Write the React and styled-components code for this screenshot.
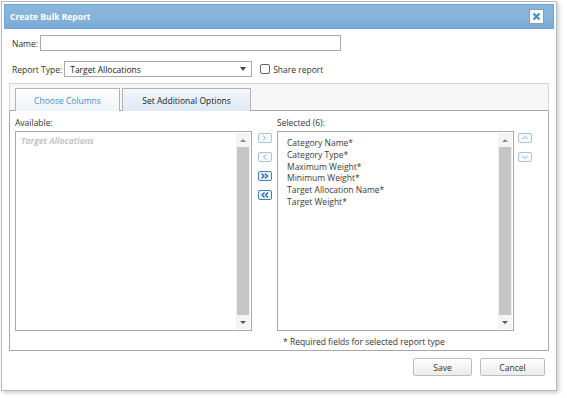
import React from "react";
import styled, { createGlobalStyle } from "styled-components";

const Global = createGlobalStyle`
  html, body { margin: 0; padding: 0; background: #fff; }
  body { font-family: "Open Sans", "Noto Sans", sans-serif; font-size: 8.5px; color: #333; }
  * { box-sizing: border-box; }
`;

const available = [];
const selected = [
  "Category Name*",
  "Category Type*",
  "Maximum Weight*",
  "Minimum Weight*",
  "Target Allocation Name*",
  "Target Weight*",
];

const Page = styled.div`
  padding: 1px;
  width: 567px;
  height: 398px;
`;

const Dialog = styled.div`
  width: 556px;
  height: 390px;
  border: 1px solid #b9b9b9;
  box-shadow: 2px 2px 4px rgba(0, 0, 0, 0.2);
  background: #fff;
  padding: 2px;
  display: flex;
  flex-direction: column;
`;

const TitleBar = styled.div`
  height: 25px;
  background: linear-gradient(#8cb7dc, #84b2da 60%, #78a9d5);
  border: 1px solid #6fa3d2;
  display: flex;
  align-items: center;
  justify-content: space-between;
  padding: 0 9px 0 5px;
  color: #fff;
  font-weight: 700;
  font-size: 8.5px;
`;

const CloseBtn = styled.div`
  width: 15px;
  height: 15px;
  background: #fff;
  border: 1px solid #9a9a9a;
  display: flex;
  align-items: center;
  justify-content: center;
`;

const Body = styled.div`
  padding: 6px 5px 0 5px;
  display: flex;
  flex-direction: column;
`;

const Row = styled.div`
  display: flex;
  align-items: center;
  height: 16px;
  margin-left: 3px;
  margin-bottom: ${(p) => p.$mb || 0}px;
`;

const Label = styled.span`
  margin-right: 2px;
  color: #333;
`;

const TextInput = styled.div`
  width: ${(p) => p.$w}px;
  height: 16px;
  border: 1px solid #aaa;
  background: #fff;
  display: flex;
  align-items: center;
  justify-content: space-between;
  padding: 0 5px;
  color: #222;
`;

const Caret = styled.span`
  width: 0;
  height: 0;
  border-left: 3px solid transparent;
  border-right: 3px solid transparent;
  border-top: 4px solid #444;
`;

const Check = styled.span`
  width: 10px;
  height: 10px;
  border: 1px solid #666;
  border-radius: 2px;
  margin: 0 3px 0 8px;
  background: #fff;
`;

const TabPanel = styled.div`
  margin-top: 6px;
  width: 540px;
  height: 268px;
  border: 1px solid #d6d6d6;
  display: flex;
  flex-direction: column;
`;

const TabStrip = styled.div`
  height: 27px;
  background: #f7f7f7;
  display: flex;
  align-items: flex-end;
  gap: 2px;
  padding-left: 5px;
  border-bottom: 1px solid #a8a8a8;
`;

const Tab = styled.div`
  height: 23px;
  width: ${(p) => p.$w}px;
  border: 1px solid #b3b3b3;
  border-bottom: none;
  background: ${(p) => (p.$active ? "linear-gradient(#f1f6fb, #dfeaf6)" : "linear-gradient(#fdfefe, #eef4f8)")};
  color: ${(p) => (p.$active ? "#222" : "#4b8dc3")};
  display: flex;
  align-items: center;
  justify-content: center;
  margin-bottom: -1px;
  position: relative;
  z-index: ${(p) => (p.$active ? 1 : 0)};
`;

const Content = styled.div`
  flex: 1;
  display: flex;
  padding: 4px 0 0 5px;
  border-left: 1px solid #a8a8a8;
  border-right: 1px solid #a8a8a8;
  border-bottom: 1px solid #a8a8a8;
  margin: 0 -1px -1px -1px;
`;

const Column = styled.div`
  display: flex;
  flex-direction: column;
`;

const ColLabel = styled.div`
  height: 16px;
  line-height: 16px;
  color: #333;
`;

const ListBox = styled.div`
  width: 237px;
  height: 200px;
  border: 1px solid #a9a9a9;
  background: #fff;
  display: flex;
`;

const Items = styled.div`
  flex: 1;
  padding: ${(p) => (p.$empty ? "3px 5px" : "5px 9px")};
  display: flex;
  flex-direction: column;
  line-height: 11.8px;
  color: #3a3a3a;
`;

const Placeholder = styled.div`
  color: #c4c4c4;
  font-style: italic;
  font-weight: 700;
`;

const Scroll = styled.div`
  width: 14px;
  margin: 1px 1px 1px 0;
  display: flex;
  flex-direction: column;
  background: #f0f0f0;
`;

const ScrollArrow = styled.div`
  height: 14px;
  display: flex;
  align-items: center;
  justify-content: center;
  background: #f4f4f4;
`;

const ArrowGlyph = styled.span`
  width: 0;
  height: 0;
  border-left: 3px solid transparent;
  border-right: 3px solid transparent;
  ${(p) => (p.$up ? "border-bottom: 3px solid #8a8a8a;" : "border-top: 3px solid #555;")}
`;

const Thumb = styled.div`
  flex: 1;
  background: #c6c6c6;
  margin: 0 1px;
`;

const MoveCol = styled.div`
  width: 25px;
  display: flex;
  flex-direction: column;
  align-items: center;
  gap: 9px;
  padding-top: 18px;
`;

const SmallBtn = styled.div`
  width: 14px;
  height: 10px;
  border: 1px solid ${(p) => (p.$on ? "#3f7fb8" : "#a9c4dc")};
  border-radius: 2px;
  background: ${(p) => (p.$on ? "#eef4fa" : "#f6f9fc")};
  display: flex;
  align-items: center;
  justify-content: center;
  color: ${(p) => (p.$on ? "#2c6aa5" : "#8fb1d0")};
`;

const OrderCol = styled.div`
  display: flex;
  flex-direction: column;
  gap: 9px;
  padding: 18px 0 0 4px;
`;

const Note = styled.div`
  margin: 5px 0 0 6px;
  color: #333;
  font-size: 8.5px;
`;

const Footer = styled.div`
  display: flex;
  justify-content: flex-end;
  gap: 8px;
  padding: 7px 4px 0 0;
`;

const Button = styled.div`
  width: ${(p) => p.$w}px;
  height: 18px;
  border: 1px solid #bcbcbc;
  border-radius: 2px;
  background: linear-gradient(#fefefe, #ececec);
  display: flex;
  align-items: center;
  justify-content: center;
  color: #333;
`;

const Chevron = ({ dir, on }) => {
  const paths = {
    right: "M2 1.5 L4.5 4 L2 6.5",
    left: "M5 1.5 L2.5 4 L5 6.5",
    up: "M1.5 5 L4 2.5 L6.5 5",
    down: "M1.5 3 L4 5.5 L6.5 3",
    rr: "M0.5 1.5 L3 4 L0.5 6.5 M4 1.5 L6.5 4 L4 6.5",
    ll: "M3.5 1.5 L1 4 L3.5 6.5 M7 1.5 L4.5 4 L7 6.5",
  };
  return (
    <svg width="8" height="8" viewBox="0 0 8 8">
      <path d={paths[dir]} fill="none" stroke="currentColor" strokeWidth={on ? 1.4 : 1} />
    </svg>
  );
};

const ScrollBar = () => (
  <Scroll>
    <ScrollArrow>
      <ArrowGlyph $up />
    </ScrollArrow>
    <Thumb />
    <ScrollArrow>
      <ArrowGlyph />
    </ScrollArrow>
  </Scroll>
);

export default function App() {
  return (
    <Page>
      <Global />
      <Dialog>
        <TitleBar>
          <span>Create Bulk Report</span>
          <CloseBtn>
            <svg width="9" height="9" viewBox="0 0 9 9">
              <path d="M1.5 1.5 L7.5 7.5 M7.5 1.5 L1.5 7.5" stroke="#3d8fd1" strokeWidth="2.2" />
            </svg>
          </CloseBtn>
        </TitleBar>
        <Body>
          <Row $mb={10}>
            <Label>Name:</Label>
            <TextInput $w={301} />
          </Row>
          <Row>
            <Label>Report Type:</Label>
            <TextInput $w={188}>
              <span>Target Allocations</span>
              <Caret />
            </TextInput>
            <Check />
            <span>Share report</span>
          </Row>
          <TabPanel>
            <TabStrip>
              <Tab $w={105}>Choose Columns</Tab>
              <Tab $w={129} $active>
                Set Additional Options
              </Tab>
            </TabStrip>
            <Content>
              <Column>
                <ColLabel>Available:</ColLabel>
                <ListBox>
                  <Items $empty>
                    {available.length === 0 && <Placeholder>Target Allocations</Placeholder>}
                  </Items>
                  <ScrollBar />
                </ListBox>
              </Column>
              <MoveCol>
                <SmallBtn>
                  <Chevron dir="right" />
                </SmallBtn>
                <SmallBtn>
                  <Chevron dir="left" />
                </SmallBtn>
                <SmallBtn $on>
                  <Chevron dir="rr" on />
                </SmallBtn>
                <SmallBtn $on>
                  <Chevron dir="ll" on />
                </SmallBtn>
              </MoveCol>
              <Column>
                <ColLabel>Selected ({selected.length}):</ColLabel>
                <ListBox>
                  <Items>
                    {selected.map((s) => (
                      <div key={s}>{s}</div>
                    ))}
                  </Items>
                  <ScrollBar />
                </ListBox>
                <Note>* Required fields for selected report type</Note>
              </Column>
              <OrderCol>
                <SmallBtn>
                  <Chevron dir="up" />
                </SmallBtn>
                <SmallBtn>
                  <Chevron dir="down" />
                </SmallBtn>
              </OrderCol>
            </Content>
          </TabPanel>
          <Footer>
            <Button $w={59}>Save</Button>
            <Button $w={65}>Cancel</Button>
          </Footer>
        </Body>
      </Dialog>
    </Page>
  );
}
